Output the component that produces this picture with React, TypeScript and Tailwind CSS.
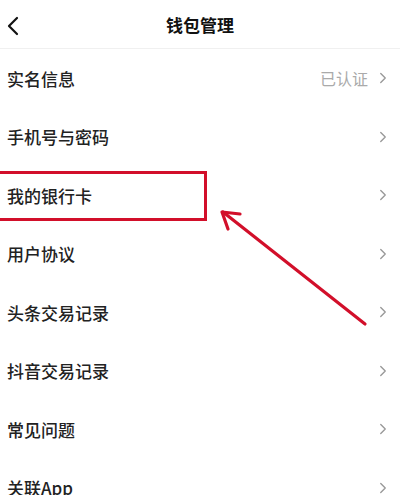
import { ChevronRight } from "lucide-react";

const rows: { label: string; value?: string }[] = [
  { label: "实名信息", value: "已认证" },
  { label: "手机号与密码" },
  { label: "我的银行卡" },
  { label: "用户协议" },
  { label: "头条交易记录" },
  { label: "抖音交易记录" },
  { label: "常见问题" },
  { label: "关联App" },
];

export default function App() {
  return (
    <div
      className="relative h-[495px] w-[400px] overflow-hidden bg-white text-[#222]"
      style={{ fontFamily: '"Noto Sans CJK SC", "Noto Sans", sans-serif' }}
    >
      {/* Header */}
      <div className="relative flex h-[49px] items-center justify-center border-b border-[#f0f0f0]">
        <svg
          className="absolute left-[6px] top-[16px]"
          width="14"
          height="20"
          viewBox="0 0 14 20"
          fill="none"
          stroke="#111"
          strokeWidth="2.2"
          strokeLinecap="round"
          strokeLinejoin="round"
        >
          <path d="M11 2 L3 10 L11 18" />
        </svg>
        <span className="text-[17px] font-bold leading-none text-[#111]">钱包管理</span>
      </div>

      {/* List */}
      <div className="flex flex-col">
        {rows.map((r) => (
          <div key={r.label} className="flex h-[58.5px] items-center pl-[7px] pr-[8px]">
            <span className="flex-1 text-[17px] font-medium leading-none">{r.label}</span>
            {r.value && (
              <span className="mr-[6px] text-[16px] leading-none text-[#aaa]">{r.value}</span>
            )}
            <ChevronRight className="h-[18px] w-[18px] text-[#999]" strokeWidth={1.8} />
          </div>
        ))}
      </div>

      {/* Annotation: red box */}
      <div className="absolute left-[-4px] top-[171px] h-[50px] w-[211px] border-[3px] border-[#d20f2a]" />

      {/* Annotation: arrow */}
      <svg
        className="absolute left-0 top-0"
        width="400"
        height="495"
        viewBox="0 0 400 495"
        fill="none"
        stroke="#d20f2a"
        strokeWidth="3.2"
        strokeLinecap="round"
        strokeLinejoin="round"
      >
        <path d="M365 324 L223 212" />
        <path d="M240 214 L222 212 L228 229" />
      </svg>
    </div>
  );
}
